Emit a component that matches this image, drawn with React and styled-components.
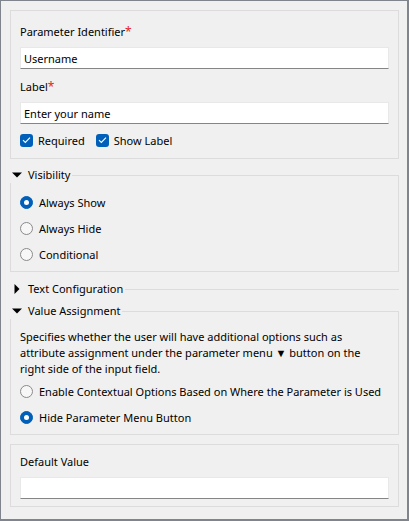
import React from "react";
import styled, { createGlobalStyle } from "styled-components";

const GlobalStyle = createGlobalStyle`
  html, body {
    margin: 0;
    padding: 0;
    background: #f0f0f0;
  }
  body {
    font-family: "Noto Sans", "Open Sans", sans-serif;
    font-size: 11px;
    color: #000;
  }
  * {
    box-sizing: border-box;
  }
`;

const Frame = styled.div`
  width: 409px;
  height: 521px;
  background: #f0f0f0;
  border-style: solid;
  border-color: #80858d;
  border-width: 1px 2px 2px 1px;
  padding: 9px 8px 0 9px;
  display: flex;
  flex-direction: column;
`;

const Panel = styled.div`
  border: 1px solid #dcdcdc;
  padding: ${(p) => p.$padTop}px 9px ${(p) => p.$padBottom}px 9px;
  margin-top: ${(p) => p.$gap || 0}px;
  display: flex;
  flex-direction: column;
`;

const FieldLabel = styled.div`
  line-height: 16px;
  height: 16px;
  margin-top: ${(p) => p.$gap || 0}px;
`;

const Req = styled.span`
  color: #e3241b;
  font-size: 12px;
`;

const TextInput = styled.input`
  margin-top: 7px;
  width: 100%;
  height: 22px;
  border: 1px solid #e8e8e8;
  border-bottom: 1px solid #858585;
  background: #fff;
  padding: 0 3px;
  font: inherit;
  color: #000;
  outline: none;
`;

const CheckRow = styled.div`
  margin-top: 8px;
  display: flex;
  gap: 11px;
`;

const Option = styled.label`
  display: flex;
  align-items: center;
  height: 16px;
  gap: ${(p) => (p.$check ? 5 : 6)}px;
  margin-top: ${(p) => p.$gap || 0}px;
  white-space: nowrap;
`;

const CheckBox = styled.span`
  width: 13px;
  height: 13px;
  flex: none;
  border-radius: 3px;
  background: #005fb8;
  display: flex;
  align-items: center;
  justify-content: center;
`;

const Radio = styled.span`
  width: 13px;
  height: 13px;
  flex: none;
  border-radius: 50%;
  border: 1px solid ${(p) => (p.$checked ? "#005fb8" : "#8a8a8a")};
  background: ${(p) => (p.$checked ? "#005fb8" : "#f7f7f7")};
  display: flex;
  align-items: center;
  justify-content: center;

  &::after {
    content: "";
    display: ${(p) => (p.$checked ? "block" : "none")};
    width: 5px;
    height: 5px;
    border-radius: 50%;
    background: #fff;
  }
`;

const GroupBox = styled.div`
  margin-top: ${(p) => p.$gap}px;
  border-top: 1px solid #dcdcdc;
  border-left: ${(p) => (p.$collapsed ? "none" : "1px solid #dcdcdc")};
  border-right: ${(p) => (p.$collapsed ? "none" : "1px solid #dcdcdc")};
  border-bottom: ${(p) => (p.$collapsed ? "none" : "1px solid #dcdcdc")};
  padding: 0 9px ${(p) => (p.$collapsed ? 0 : 9)}px 9px;
  display: flex;
  flex-direction: column;
`;

const GroupHeader = styled.div`
  margin: -9px 0 0 ${(p) => (p.$collapsed ? -9 : -10)}px;
  height: 16px;
  align-self: flex-start;
  display: flex;
  align-items: center;
  background: #f0f0f0;
  padding-right: 2px;
  line-height: 16px;
`;

const Caret = styled.span`
  width: 10px;
  height: 10px;
  margin: 0 6px 0 2px;
  display: flex;
  align-items: center;
  justify-content: center;
`;

const Description = styled.div`
  margin-top: 10px;
  line-height: 16px;
`;

const RadioList = styled.div`
  margin-top: ${(p) => p.$gap}px;
  display: flex;
  flex-direction: column;
  gap: 10px;
`;

const CheckIcon = () => (
  <svg width="9" height="8" viewBox="0 0 9 8">
    <polyline
      points="1,4.2 3.3,6.4 8,1.6"
      fill="none"
      stroke="#fff"
      strokeWidth="1.1"
    />
  </svg>
);

const CaretIcon = ({ open }) =>
  open ? (
    <svg width="10" height="6" viewBox="0 0 10 6">
      <polygon points="0,0.5 10,0.5 5,5.5" fill="#000" />
    </svg>
  ) : (
    <svg width="6" height="10" viewBox="0 0 6 10">
      <polygon points="0.5,0 5.5,5 0.5,10" fill="#000" />
    </svg>
  );

const Group = ({ title, open, gap, children }) => (
  <GroupBox $gap={gap} $collapsed={!open}>
    <GroupHeader $collapsed={!open}>
      <Caret>
        <CaretIcon open={open} />
      </Caret>
      {title}
    </GroupHeader>
    {children}
  </GroupBox>
);

const RadioOption = ({ checked, gap, children }) => (
  <Option $gap={gap}>
    <Radio $checked={checked} />
    {children}
  </Option>
);

export default function App() {
  return (
    <>
      <GlobalStyle />
      <Frame>
        <Panel $padTop={13} $padBottom={10}>
          <FieldLabel>
            Parameter Identifier<Req>*</Req>
          </FieldLabel>
          <TextInput defaultValue="Username" />
          <FieldLabel $gap={10}>
            Label<Req>*</Req>
          </FieldLabel>
          <TextInput defaultValue="Enter your name" />
          <CheckRow>
            <Option $check>
              <CheckBox>
                <CheckIcon />
              </CheckBox>
              Required
            </Option>
            <Option $check>
              <CheckBox>
                <CheckIcon />
              </CheckBox>
              Show Label
            </Option>
          </CheckRow>
        </Panel>

        <Group title="Visibility" open gap={16}>
          <RadioList $gap={11}>
            <RadioOption checked>Always Show</RadioOption>
            <RadioOption>Always Hide</RadioOption>
            <RadioOption>Conditional</RadioOption>
          </RadioList>
        </Group>

        <Group title="Text Configuration" gap={17} />

        <Group title="Value Assignment" open gap={14}>
          <Description>
            Specifies whether the user will have additional options such as
            <br />
            attribute assignment under the parameter menu ▼ button on the
            <br />
            right side of the input field.
          </Description>
          <RadioList $gap={6}>
            <RadioOption>
              Enable Contextual Options Based on Where the Parameter is Used
            </RadioOption>
            <RadioOption checked>Hide Parameter Menu Button</RadioOption>
          </RadioList>
        </Group>

        <Panel $padTop={9} $padBottom={7} $gap={9}>
          <FieldLabel>Default Value</FieldLabel>
          <TextInput defaultValue="" />
        </Panel>
      </Frame>
    </>
  );
}
